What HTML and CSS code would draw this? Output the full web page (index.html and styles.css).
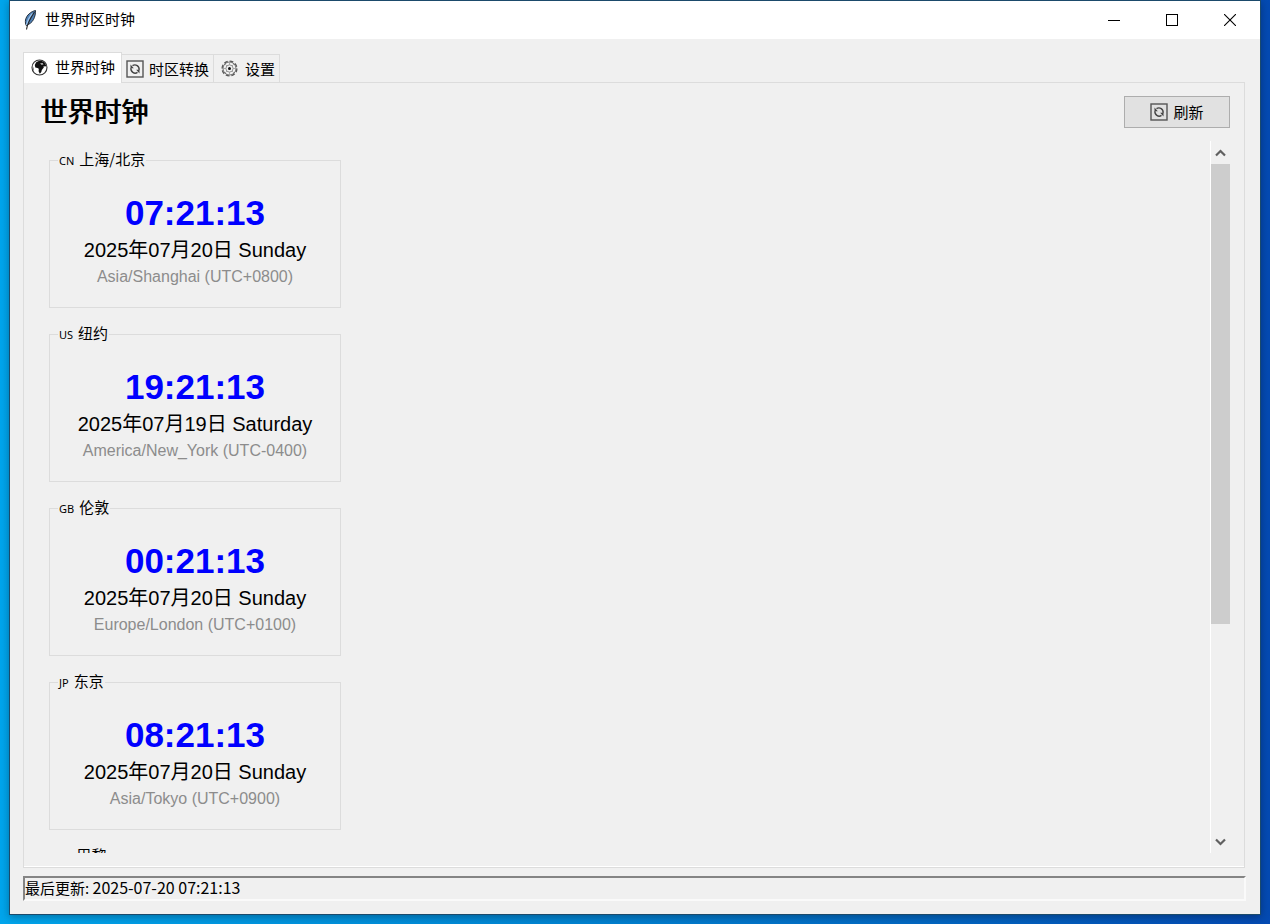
FILE: index.html
```html
<!DOCTYPE html>
<html lang="zh-CN">
<head>
  <meta charset="UTF-8">
  <meta name="viewport" content="width=device-width, initial-scale=1.0">
  <title>世界时区时钟</title>
  <link rel="stylesheet" href="styles.css">
</head>
<body>
  <div class="window">
    <header class="titlebar">
      <svg class="feather" width="14" height="20" viewBox="0 0 14 20">
        <path d="M12.5 0.5C8 1.5 3.500 5 2.500 10c-.3 2 0 4 .7 5.500C6 14.500 9 12.500 10.500 9.500 12 6.500 12.600 3.500 12.500.5z" fill="#4d7fb5" stroke="#26303c"/>
        <path d="M9.500 3.500C6 7 4.500 11 3.500 15" fill="none" stroke="#9fc4ea" stroke-width="1.300"/>
        <path d="M11.500 2C7.500 8 4.500 13 3.500 19.500" fill="none" stroke="#222" stroke-width="1.100"/>
      </svg>
      <span class="window-title">世界时区时钟</span>
      <button class="window-button" aria-label="最小化"><svg width="12" height="12"><path d="M0 6.500h12" stroke="#000"/></svg></button>
      <button class="window-button" aria-label="最大化"><svg width="12" height="12"><rect x=".5" y=".5" width="11" height="11" fill="none" stroke="#000"/></svg></button>
      <button class="window-button" aria-label="关闭"><svg width="12" height="12"><path d="M0 0l12 12M12 0L0 12" stroke="#000" stroke-width="1.100"/></svg></button>
    </header>

    <main class="content">
      <div class="tabs" role="tablist">
        <button class="tab active" role="tab" aria-selected="true">
          <svg width="17" height="17" viewBox="0 0 17 17">
            <circle cx="8.500" cy="8.500" r="7.500" fill="#fff" stroke="#333" stroke-width="1.100"/>
            <path d="M5 3.500C6.500 2 8.500 1.500 10.500 1.700l3 1.800 1.700 3-.7 1-2-.3.3 1.300-2 2.500-.5 2-1.500 1.700-1.200-2.500.2-2.500L6.500 9 4.300 8.500 3.800 6z" fill="#111"/>
            <path d="M9 4.500l2.500-.5 1 1.500-2 .3z" fill="#ccc"/>
            <path d="M1.500 6.500l1.200 2.500.3 3.500C2 11 1.200 9 1.500 6.500z" fill="#777"/>
          </svg>
          世界时钟
        </button>
        <button class="tab" role="tab" aria-selected="false">
          <svg width="18" height="18" viewBox="0 0 18 18">
            <rect x="1" y="1" width="16" height="16" fill="none" stroke="#555" stroke-width="1.400"/>
            <path d="M6.500 5.700A4.200 4.200 0 0 1 13 10M11.500 12.400A4.200 4.200 0 0 1 5 8.200" fill="none" stroke="#444" stroke-width="1.400"/>
            <path d="M4.500 4.500v3.800h3.300zM13.500 13.600V9.800h-3.300z" fill="#444"/>
          </svg>
          时区转换
        </button>
        <button class="tab" role="tab" aria-selected="false">
          <svg width="17" height="17" viewBox="0 0 17 17">
            <circle cx="8.500" cy="8.500" r="7.400" fill="none" stroke="#555" stroke-width="1.300" stroke-dasharray="3.800 2"/>
            <circle cx="8.500" cy="8.500" r="6.500" fill="none" stroke="#666" stroke-width=".9"/>
            <circle cx="8.500" cy="8.500" r="3.600" fill="none" stroke="#888" stroke-width=".9"/>
            <path d="M8.500 2v3M8.500 12v3M2 8.500h3M12 8.500h3M4 4l2 2M11 11l2 2M13 4l-2 2M6 11l-2 2" stroke="#999" stroke-width=".8"/>
            <circle cx="8.500" cy="8.500" r="1.500" fill="#111"/>
          </svg>
          设置
        </button>
      </div>

      <section class="panel" role="tabpanel">
        <div class="panel-header">
          <h1>世界时钟</h1>
          <button class="refresh">
            <svg width="18" height="18" viewBox="0 0 18 18">
              <rect x="1" y="1" width="16" height="16" fill="none" stroke="#555" stroke-width="1.400"/>
              <path d="M6.500 5.700A4.200 4.200 0 0 1 13 10M11.500 12.400A4.200 4.200 0 0 1 5 8.200" fill="none" stroke="#444" stroke-width="1.400"/>
              <path d="M4.500 4.500v3.800h3.300zM13.500 13.600V9.800h-3.300z" fill="#444"/>
            </svg>
            刷新
          </button>
        </div>

        <div class="scroll-area">
          <div class="clocks">
            <fieldset class="clock">
              <legend><small>CN</small>上海/北京</legend>
              <div class="time">07:21:13</div>
              <div class="date">2025年07月20日 Sunday</div>
              <div class="zone">Asia/Shanghai (UTC+0800)</div>
            </fieldset>
            <fieldset class="clock">
              <legend><small>US</small>纽约</legend>
              <div class="time">19:21:13</div>
              <div class="date">2025年07月19日 Saturday</div>
              <div class="zone">America/New_York (UTC-0400)</div>
            </fieldset>
            <fieldset class="clock">
              <legend><small>GB</small>伦敦</legend>
              <div class="time">00:21:13</div>
              <div class="date">2025年07月20日 Sunday</div>
              <div class="zone">Europe/London (UTC+0100)</div>
            </fieldset>
            <fieldset class="clock">
              <legend><small>JP</small>东京</legend>
              <div class="time">08:21:13</div>
              <div class="date">2025年07月20日 Sunday</div>
              <div class="zone">Asia/Tokyo (UTC+0900)</div>
            </fieldset>
            <fieldset class="clock">
              <legend><small>FR</small>巴黎</legend>
            </fieldset>
          </div>
          <div class="scrollbar">
            <button class="arrow" aria-label="向上滚动"><svg width="11" height="8"><path d="M1 6.500l4.500-4.500L10 6.500" fill="none" stroke="#606060" stroke-width="2.200"/></svg></button>
            <div class="track"><div class="thumb"></div></div>
            <button class="arrow" aria-label="向下滚动"><svg width="11" height="8"><path d="M1 1.500L5.500 6 10 1.500" fill="none" stroke="#606060" stroke-width="2.200"/></svg></button>
          </div>
        </div>
      </section>

      <footer class="status">最后更新: <time>2025-07-20 07:21:13</time></footer>
    </main>
  </div>
</body>
</html>
```
FILE: styles.css
```css
* {
  box-sizing: border-box;
}
body {
  margin: 0;
  height: 100vh;
  padding: 0 9px 9px;
  display: flex;
  background: linear-gradient(90deg, #00a5ec, #0284d2 45%, #044ab2);
  font-family: "Noto Sans CJK SC", sans-serif;
  font-size: 15px;
  line-height: 20px;
  color: #000;
}
button {
  font: inherit;
  color: inherit;
  border: none;
  padding: 0;
  background: none;
}
svg {
  display: block;
  flex: none;
}
.window {
  flex: 1;
  min-width: 0;
  display: flex;
  flex-direction: column;
  background: #f0f0f0;
  border: 1px solid #1b4a6b;
  box-shadow: 0 2px 8px rgba(0, 0, 0, 0.3);
}

/* title bar */
.titlebar {
  display: flex;
  align-items: center;
  height: 38px;
  padding: 0 1px 0 13px;
  background: #fff;
}
.window-title {
  flex: 1;
  margin-left: 8px;
  line-height: 22px;
  padding-bottom: 2px;
}
.window-button {
  width: 58px;
  height: 38px;
  display: flex;
  align-items: center;
  justify-content: center;
}

.content {
  flex: 1;
  min-height: 0;
  display: flex;
  flex-direction: column;
  padding: 13px 15px 13px 13px;
}

/* tabs */
.tabs {
  display: flex;
  align-items: flex-end;
}
.tab {
  display: flex;
  align-items: center;
  gap: 5px;
  height: 28px;
  padding: 0 4px;
  border: 1px solid #dcdcdc;
  border-bottom: none;
  border-left: none;
}
.tab:last-child {
  gap: 7px;
  padding-left: 7px;
}
.tab.active {
  gap: 7px;
  height: 31px;
  margin-bottom: -1px;
  padding: 0 6px 2px 7px;
  border-left: 1px solid #dcdcdc;
  background: #fff;
  z-index: 1;
}

/* panel */
.panel {
  flex: 1;
  min-height: 0;
  display: flex;
  flex-direction: column;
  padding: 13px 14px 14px;
  border: 1px solid #dcdcdc;
  box-shadow: inset 0 -1px #fff;
}
.panel-header {
  display: flex;
  justify-content: space-between;
  align-items: center;
  margin-bottom: 13px;
}
h1 {
  margin: 0 0 0 2px;
  padding-bottom: 2px;
  font-size: 27px;
  font-weight: normal;
  line-height: 30px;
  text-shadow: 1px 0 #000;
}
.refresh {
  display: flex;
  align-items: center;
  justify-content: center;
  gap: 5px;
  width: 106px;
  height: 32px;
  padding-bottom: 1px;
  border: 1px solid #adadad;
  background: #e1e1e1;
}
.scroll-area {
  flex: 1;
  min-height: 0;
  display: flex;
  justify-content: space-between;
}
.clocks {
  overflow: hidden;
  padding: 8px 11px;
}

/* clock card */
.clock {
  width: 292px;
  height: 159px;
  margin: 0 0 15px;
  padding: 22px 0 0;
  border: 1px solid #dcdcdc;
}
.clock legend {
  margin-left: 8px;
  padding: 0 1px;
}
.clock small {
  margin-right: 5px;
  font-family: "Noto Sans", sans-serif;
  font-size: 11px;
}
.time, .date, .zone {
  font-family: "Liberation Sans", "Noto Sans CJK SC", sans-serif;
  text-align: center;
}
.time {
  font-size: 35px;
  font-weight: bold;
  line-height: 40px;
  color: #0000ff;
}
.date {
  font-size: 20px;
  line-height: 34px;
}
.zone {
  font-size: 16px;
  line-height: 20px;
  color: #8c8c8c;
}

/* scrollbar */
.scrollbar {
  display: flex;
  flex-direction: column;
  width: 20px;
  border-left: 1px solid #fff;
}
.arrow {
  display: flex;
  align-items: center;
  justify-content: center;
  height: 23px;
}
.track {
  flex: 1;
}
.thumb {
  height: 69%;
  background: #cdcdcd;
}

/* status bar */
.status {
  height: 25px;
  margin: 8px -1px 0 0;
  border: 2px solid #848484;
  border-right-color: #fafafa;
  border-bottom-color: #fafafa;
  line-height: 18px;
}
.status time {
  font-size: 16px;
}
```
